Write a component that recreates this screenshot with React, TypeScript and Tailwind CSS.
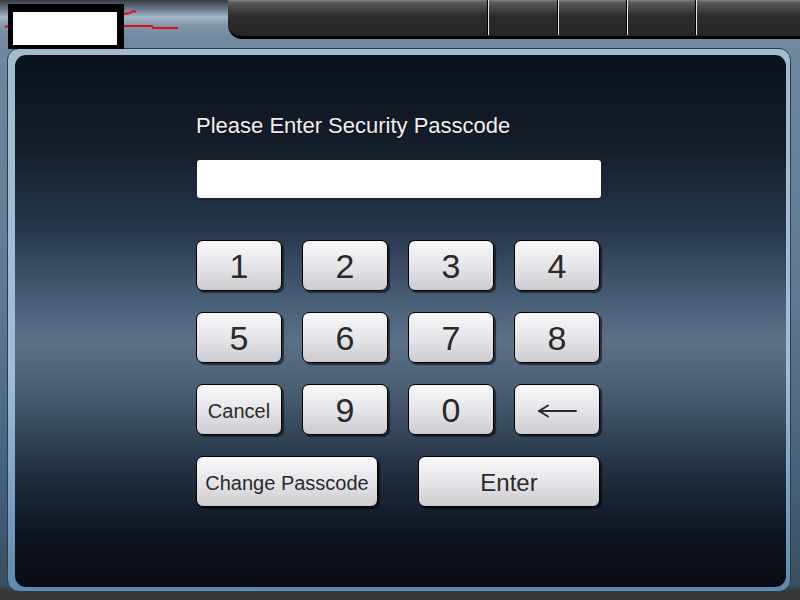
const keys = ['1', '2', '3', '4', '5', '6', '7', '8', 'Cancel', '9', '0', 'back'];

function BackArrow() {
  return (
    <svg width="40" height="14" viewBox="0 0 40 14" fill="none" stroke="#2a2a2a" strokeWidth="2" strokeLinecap="round">
      <line x1="2" y1="7" x2="39" y2="7" />
      <polyline points="11,1.5 2,7 11,12.5" strokeLinejoin="round" />
    </svg>
  );
}

function Key({ label, className = '' }: { label: string; className?: string }) {
  const size = label === 'Cancel' ? 'text-[20px]' : 'text-[34px]';
  return (
    <button
      className={`h-[51px] pt-[2px] rounded-[7px] border border-black bg-[linear-gradient(180deg,#f8f8fa_0%,#e6e6ea_50%,#cbcbd0_100%)] shadow-[2px_2px_1px_rgba(0,0,0,0.55)] flex items-center justify-center text-[#2a2a2a] ${size} ${className}`}
    >
      {label === 'back' ? <BackArrow /> : label}
    </button>
  );
}

export default function App() {
  return (
    <div className="w-[800px] h-[600px] relative overflow-hidden font-['Liberation_Sans',Arial,sans-serif] bg-[linear-gradient(180deg,#3a3c3f_0px,#5f7183_8px,#a2b5c5_17px,#7e94a8_26px,#7088a0_40px,#5d7993_300px,#44607c_480px,#3c4e60_585px,#353535_592px,#353535_600px)]">
      <header className="flex h-[48px]">
        <div className="relative z-10 ml-[8px] mt-[4px] w-[116px] h-[45px] bg-white border-black border-t-[8px] border-l-[5px] border-r-[7px] border-b-[4px]" />
        <nav className="ml-[104px] flex-1 h-[39px] rounded-bl-[14px] border-b-[3px] border-black bg-[linear-gradient(180deg,#8a8a8a_0px,#5c5c5c_2px,#444_9px,#2c2c2c_16px,#262626_100%)] flex">
          <div className="w-[260px]" />
          {[70, 69, 69].map((w, i) => (
            <div key={i} className="h-[35px] border-l border-[#e6e6e6] shadow-[-1px_0_0_#000]" style={{ width: w }} />
          ))}
          <div className="flex-1 h-[35px] border-l border-[#e6e6e6] shadow-[-1px_0_0_#000]" />
        </nav>
      </header>

      <svg className="absolute left-0 top-0 z-20" width="180" height="32" viewBox="0 0 180 32">
        <polyline points="124,14 130,13 133,11 136,12" fill="none" stroke="#e01010" strokeWidth="2" />
        <polyline points="5,27 8,26" fill="none" stroke="#e01010" strokeWidth="2" />
        <polyline points="124,26 152,26 153,28 178,28" fill="none" stroke="#e01010" strokeWidth="2" />
      </svg>

      <div className="ml-[7px] mr-[9px] h-[544px] rounded-[12px] border border-[#2f3b47] pt-[6px] pl-[7px] pr-[4px] pb-[4px] bg-[linear-gradient(180deg,#a2bcd0_0%,#a0bdd4_60%,#5d89ae_100%)]">
        <main className="h-full rounded-[11px] pl-[181px] pt-[59px] bg-[linear-gradient(180deg,#0c121b_0%,#151e2b_18%,#26374d_33%,#4b6179_47%,#5b7188_54%,#475b70_64%,#223042_78%,#0f1520_90%,#080b12_100%)]">
          <h1 className="text-[22px] leading-[24px] text-[#f0f0f0] [text-shadow:0_1px_1px_rgba(0,0,0,0.5)]">
            Please Enter Security Passcode
          </h1>
          <div className="mt-[22px] ml-[1px] w-[404px] h-[38px] rounded-[3px] bg-white shadow-[0_1px_2px_rgba(0,0,0,0.4)]" />
          <div className="mt-[42px] w-[404px] grid grid-cols-4 gap-x-[20px] gap-y-[21px]">
            {keys.map((k) => (
              <Key key={k} label={k} />
            ))}
          </div>
          <div className="mt-[21px] w-[404px] flex justify-between">
            <Key label="Change Passcode" className="w-[182px] !text-[20px]" />
            <Key label="Enter" className="w-[182px] !text-[24px]" />
          </div>
        </main>
      </div>
    </div>
  );
}
